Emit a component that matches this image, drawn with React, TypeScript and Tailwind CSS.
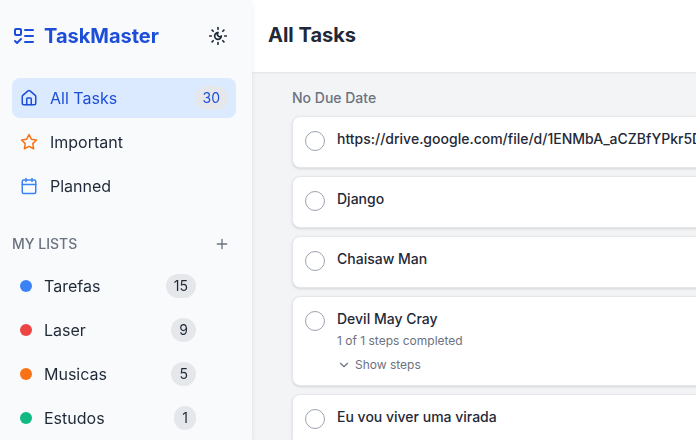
import type { ReactNode } from "react";

function Icon({ size, className = "", children }: { size: number; className?: string; children: ReactNode }) {
  return (
    <svg width={size} height={size} viewBox="0 0 24 24" fill="none" stroke="currentColor" strokeWidth="2" strokeLinecap="round" strokeLinejoin="round" className={`shrink-0 ${className}`}>
      {children}
    </svg>
  );
}

const views = [
  {
    label: "All Tasks",
    count: 30,
    color: "",
    icon: (
      <>
        <path d="M15 21v-8a1 1 0 0 0-1-1h-4a1 1 0 0 0-1 1v8" />
        <path d="M3 10a2 2 0 0 1 .709-1.528l7-5.999a2 2 0 0 1 2.582 0l7 5.999A2 2 0 0 1 21 10v9a2 2 0 0 1-2 2H5a2 2 0 0 1-2-2z" />
      </>
    ),
  },
  {
    label: "Important",
    color: "text-[#f97316]",
    icon: <polygon points="12 2 15.09 8.26 22 9.27 17 14.14 18.18 21.02 12 17.77 5.82 21.02 7 14.14 2 9.27 8.91 8.26 12 2" />,
  },
  {
    label: "Planned",
    color: "text-[#3b82f6]",
    icon: (
      <>
        <rect width="18" height="18" x="3" y="4" rx="2" />
        <path d="M8 2v4M16 2v4M3 10h18" />
      </>
    ),
  },
];

const lists = [
  { label: "Tarefas", count: 15, dot: "bg-[#3b82f6]" },
  { label: "Laser", count: 9, dot: "bg-[#ef4444]" },
  { label: "Musicas", count: 5, dot: "bg-[#f97316]" },
  { label: "Estudos", count: 1, dot: "bg-[#10b981]" },
];

const tasks = [
  { title: "https://drive.google.com/file/d/1ENMbA_aCZBfYPkr5D" },
  { title: "Django" },
  { title: "Chaisaw Man" },
  { title: "Devil May Cray", steps: "1 of 1 steps completed" },
  { title: "Eu vou viver uma virada" },
];

function Count({ value }: { value: number }) {
  return <span className="rounded-full bg-[#e5e7eb] px-2 py-0.5 text-sm">{value}</span>;
}

function Sidebar() {
  return (
    <aside className="relative z-10 flex w-[252px] shrink-0 flex-col bg-[#f9fafc] text-[#1f2937] shadow-md will-change-transform">
      <div className="flex h-[72px] shrink-0 items-center justify-between pr-6 pl-3">
        <div className="flex items-center gap-2 text-[#1d4ed8]">
          <Icon size={24}>
            <rect x="3" y="5" width="6" height="6" rx="1" />
            <path d="m3 17 2 2 4-4M13 6h8M13 12h8M13 18h8" />
          </Icon>
          <h1 className="text-xl font-bold">TaskMaster</h1>
        </div>
        <Icon size={20}>
          <path d="M12 8a2.83 2.83 0 0 0 4 4 4 4 0 1 1-4-4" />
          <path d="M12 2v2M12 20v2M4.9 4.9l1.4 1.4M17.7 17.7l1.4 1.4M2 12h2M20 12h2M6.3 17.7l-1.4 1.4M19.1 4.9l-1.4 1.4" />
        </Icon>
      </div>
      <nav className="mt-1.5 flex flex-col gap-1 pr-4 pl-3">
        {views.map((v) => (
          <div key={v.label} className={`flex h-10 items-center rounded-lg px-2 ${v.count ? "bg-[#dbeafe] text-[#1d4ed8]" : ""}`}>
            <Icon size={18} className={v.color}>{v.icon}</Icon>
            <span className="ml-3 flex-1">{v.label}</span>
            {v.count && <Count value={v.count} />}
          </div>
        ))}
      </nav>
      <div className="mt-7 flex h-[20px] items-center justify-between pr-[22px] pl-3 text-[#6b7280]">
        <h2 className="text-sm font-medium">MY LISTS</h2>
        <Icon size={16}>
          <path d="M5 12h14M12 5v14" />
        </Icon>
      </div>
      <div className="mt-3 flex flex-col gap-1 pr-14 pl-5">
        {lists.map((l) => (
          <div key={l.label} className="flex h-10 items-center">
            <span className={`size-3 rounded-full ${l.dot}`} />
            <span className="ml-3 flex-1">{l.label}</span>
            <Count value={l.count} />
          </div>
        ))}
      </div>
    </aside>
  );
}

function Task({ title, steps }: { title: string; steps?: string }) {
  return (
    <div className={`flex shrink-0 rounded-lg border border-[#e5e7eb] bg-white px-3 pt-3 shadow-sm ${steps ? "h-[90px]" : "h-[52px]"}`}>
      <span className="mt-0.5 size-5 shrink-0 rounded-full border border-[#9ca3af]" />
      <div className="ml-3">
        <p className="text-sm font-medium whitespace-nowrap text-[#1f2937]">{title}</p>
        {steps && (
          <div className="text-xs text-[#6b7280]">
            <p className="mt-1">{steps}</p>
            <div className="mt-2 flex items-center gap-1">
              <Icon size={14}>
                <path d="m6 9 6 6 6-6" />
              </Icon>
              Show steps
            </div>
          </div>
        )}
      </div>
    </div>
  );
}

export default function App() {
  return (
    <div className="flex h-[440px] w-[696px] overflow-hidden bg-[#f3f4f6] font-[Inter,sans-serif]">
      <Sidebar />
      <main className="flex min-w-0 flex-1 flex-col">
        <header className="flex h-[72px] shrink-0 items-center bg-white px-4 pb-0.5 shadow-[0_1px_2px_0_rgb(0_0_0/0.08)]">
          <h2 className="text-xl font-bold text-[#1f2937]">All Tasks</h2>
        </header>
        <section className="flex w-[800px] flex-col pt-4 pl-10">
          <h3 className="text-sm font-medium text-[#6b7280]">No Due Date</h3>
          <div className="mt-2 flex flex-col gap-2">
            {tasks.map((t) => (
              <Task key={t.title} {...t} />
            ))}
          </div>
        </section>
      </main>
    </div>
  );
}
